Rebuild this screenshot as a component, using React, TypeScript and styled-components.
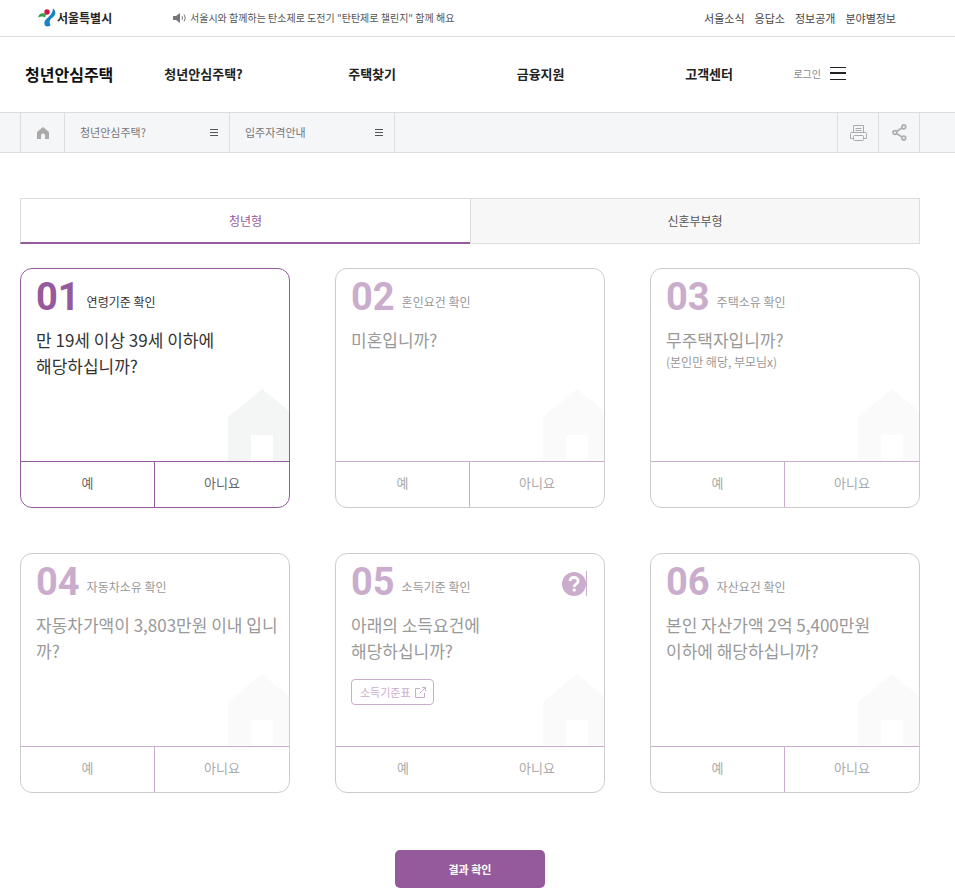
import React, { useState } from "react";
import styled, { createGlobalStyle, css } from "styled-components";

const PURPLE = "#955a9b";
const PURPLE_SOFT = "#caadcd";
const LINE = "#dddddd";

const GlobalStyle = createGlobalStyle`
  *, *::before, *::after { box-sizing: border-box; }
  body {
    margin: 0;
    background: #fff;
    color: #333;
    font-family: "Noto Sans CJK KR", "Noto Sans", sans-serif;
    font-size: 12px;
    line-height: 20px;
  }
  a { color: inherit; text-decoration: none; }
  h1, h2, p, ul, ol { margin: 0; padding: 0; font-weight: inherit; font-size: inherit; }
  ul, ol { list-style: none; }
  button { font: inherit; color: inherit; background: none; border: 0; padding: 0; margin: 0; cursor: pointer; }
  svg { display: block; flex: none; }
`;

const TopBar = styled.div`
  display: flex;
  align-items: center;
  height: 37px;
  padding: 0 59px 0 37px;
  border-bottom: 1px solid ${LINE};
`;

const CityLogo = styled.a`
  display: flex;
  align-items: center;
  gap: 1px;
  width: 136px;
  color: #2b2522;
  font-size: 12px;
  font-weight: 700;
`;

const Notice = styled.a`
  display: flex;
  align-items: center;
  gap: 3px;
  color: #555;
  font-size: 10px;
`;

const UtilityLinks = styled.ul`
  display: flex;
  gap: 10px;
  margin-left: auto;
  color: #444;
  font-size: 11px;
`;

const MainHeader = styled.header`
  display: flex;
  align-items: center;
  height: 75px;
  padding: 0 109px 2px 25px;
`;

const Brand = styled.h1`
  color: #111;
  font-size: 16px;
  font-weight: 700;
`;

const MainNav = styled.nav`
  flex: 1;
  padding-left: 6px;
`;

const MainNavList = styled.ul`
  display: grid;
  grid-template-columns: repeat(4, 1fr);
  text-align: center;
  color: #222;
  font-size: 13px;
  font-weight: 700;
`;

const Login = styled.a`
  color: #888;
  font-size: 10px;
`;

const MenuButton = styled.button`
  margin-left: 9px;
`;

const LocationBar = styled.nav`
  display: flex;
  height: 41px;
  padding: 0 35px 0 20px;
  border: solid ${LINE};
  border-width: 1px 0;
  background: #f5f6f8;
`;

const LocationHome = styled.a`
  display: flex;
  align-items: center;
  justify-content: center;
  width: 45px;
  border: solid ${LINE};
  border-width: 0 1px;
`;

const LocationMenu = styled.button`
  display: flex;
  align-items: center;
  justify-content: space-between;
  width: 165px;
  padding: 0 11px 1px 15px;
  border-right: 1px solid ${LINE};
  color: #777;
  font-size: 11px;
`;

const LocationTools = styled.div`
  display: flex;
  margin-left: auto;
  border-left: 1px solid ${LINE};
`;

const ToolButton = styled.button`
  display: flex;
  align-items: center;
  justify-content: center;
  width: 41px;
  border-right: 1px solid ${LINE};
`;

const Content = styled.main`
  padding: 45px 35px 7px 20px;
`;

const Tabs = styled.div`
  display: grid;
  grid-template-columns: 1fr 1fr;
`;

const Tab = styled.button<{ $active: boolean }>`
  height: 46px;
  border: 1px solid ${LINE};
  background: #f7f7f7;
  color: #555;
  font-size: 12px;
  &:first-child {
    border-right: 0;
  }
  ${(p) =>
    p.$active &&
    css`
      border-bottom: 2px solid ${PURPLE};
      background: #fff;
      color: ${PURPLE};
    `}
`;

const CardGrid = styled.ol`
  display: grid;
  grid-template-columns: repeat(3, 1fr);
  gap: 45px;
  margin-top: 24px;
`;

const Card = styled.li<{ $active: boolean }>`
  --accent: ${(p) => (p.$active ? PURPLE : PURPLE_SOFT)};
  display: flex;
  flex-direction: column;
  min-height: 240px;
  border: 1px solid ${(p) => (p.$active ? PURPLE : "#cccccc")};
  border-radius: 12px;
  overflow: hidden;
  color: ${(p) => (p.$active ? "#333" : "#999")};
`;

const CardBody = styled.div`
  position: relative;
  flex: 1;
  padding: 8px 10px 15px 15px;
`;

const CardTitle = styled.h2`
  display: flex;
  align-items: flex-start;
  gap: 7px;
  height: 50px;
  font-size: 12px;
  line-height: 50px;
`;

const StepNumber = styled.span`
  color: var(--accent);
  font-family: Roboto, sans-serif;
  font-size: 38px;
  font-weight: 700;
  line-height: 40px;
`;

const Question = styled.p`
  font-size: 17px;
  line-height: 26px;
  word-break: break-all;
`;

const QuestionNote = styled.p`
  font-size: 12px;
  line-height: 18px;
`;

const HouseShape = styled.svg`
  position: absolute;
  right: 0;
  bottom: 0;
`;

const HelpLink = styled.a`
  position: absolute;
  top: 17px;
  right: 17px;
  border-right: 1px solid var(--accent);
`;

const TableLink = styled.a`
  display: inline-flex;
  align-items: center;
  gap: 4px;
  height: 26px;
  margin-top: 15px;
  padding: 0 7px 0 8px;
  border: 1px solid var(--accent);
  border-radius: 4px;
  color: var(--accent);
  font-size: 11px;
`;

const Answers = styled.div<{ $divided: boolean }>`
  display: grid;
  grid-template-columns: 1fr 1fr;
  height: 46px;
  border-top: 1px solid var(--accent);
  button:first-child {
    border-right: ${(p) => (p.$divided ? "1px solid var(--accent)" : "0")};
  }
`;

const Answer = styled.button<{ $active: boolean }>`
  padding-bottom: 3px;
  color: ${(p) => (p.$active ? "#666" : "#aaa")};
  font-size: 13px;
`;

const Submit = styled.button`
  display: block;
  width: 150px;
  height: 38px;
  margin: 57px auto 0;
  border-radius: 5px;
  background: ${PURPLE};
  color: #fff;
  font-size: 11px;
  font-weight: 700;
`;

const CityMark = () => (
  <svg width="19" height="20" viewBox="0 0 19 20" aria-hidden="true">
    <path d="M1 9.500C2 5.500 5.500 4 9 6.500L8 9.500C6 8 3.500 8.500 1 9.500Z" fill="#2f9e49" />
    <circle cx="10" cy="4" r="2.700" fill="#d21243" />
    <path d="M16 .500C19.500 3 19 7.500 15.500 9.500C12.500 11.500 12 14 13.500 17.500C10 20 6.500 18 7.500 14C8.500 10 15.500 8 16 .500Z" fill="#1783c6" />
  </svg>
);

const SpeakerIcon = () => (
  <svg width="14" height="12" viewBox="0 0 14 12" fill="none" stroke="#777" aria-hidden="true">
    <path d="M0 4H3L7 1V11L3 8H0Z" fill="#777" stroke="none" />
    <path d="M9 4.200Q10 6 9 7.800M11 2.500Q13.600 6 11 9.500" />
  </svg>
);

const MenuIcon = () => (
  <svg width="16" height="13" viewBox="0 0 16 13" fill="#222" aria-hidden="true">
    <path d="M0 0H16V1H0ZM0 5H16V7H0ZM0 12H16V13H0Z" />
  </svg>
);

const HomeIcon = () => (
  <svg width="12" height="12" viewBox="0 0 12 12" aria-hidden="true">
    <path d="M6 0L12 5V12H8V8.500Q8 6.500 6 6.500T4 8.500V12H0V5Z" fill="#aaa" />
  </svg>
);

const ListIcon = () => (
  <svg width="8" height="7" viewBox="0 0 8 7" fill="#555" aria-hidden="true">
    <path d="M0 0H8V1H0ZM0 3H8V4H0ZM0 6H8V7H0Z" />
  </svg>
);

const PrintIcon = () => (
  <svg width="17" height="16" viewBox="0 0 17 16" fill="none" stroke="#aaa" aria-hidden="true">
    <path d="M3.500 7V.500H13.500V7M5.500 3.500H11.500M5.500 5.500H11.500M3.500 13.500H.500V8.500Q.500 7.500 1.500 7.500H15.500Q16.500 7.500 16.500 8.500V13.500H13.500" />
    <rect x="3.500" y="10.500" width="10" height="5" rx="1" />
  </svg>
);

const ShareIcon = () => (
  <svg width="15" height="17" viewBox="0 0 15 17" fill="none" stroke="#b0b0b0" strokeWidth="1.800" aria-hidden="true">
    <path d="M4.500 7.500L10 4M4.500 9.500L10 13" />
    <circle cx="2.900" cy="8.500" r="1.900" />
    <circle cx="11.800" cy="2.900" r="1.900" />
    <circle cx="11.800" cy="14.100" r="1.900" />
  </svg>
);

const HelpIcon = () => (
  <svg width="24" height="25" viewBox="0 0 24 25" fill="none" aria-hidden="true">
    <circle cx="12" cy="13" r="12" fill={PURPLE_SOFT} />
    <path d="M8 10.200C8.200 7.500 10 6.500 12 6.500C14.500 6.500 16.200 8 16.200 10C16.200 12.800 12.200 12.800 12.200 16" stroke="#fff" strokeWidth="2.800" />
    <circle cx="12.200" cy="19" r="1.700" fill="#fff" />
  </svg>
);

const OpenIcon = () => (
  <svg width="11" height="11" viewBox="0 0 11 11" fill="none" stroke={PURPLE_SOFT} aria-hidden="true">
    <path d="M5 1.500H.500V10.500H9.500V6M7 .500H10.500V4M10.500 .500L5 6" />
  </svg>
);

const House = ({ active }: { active: boolean }) => (
  <HouseShape width="61" height="72" viewBox="0 0 61 72" aria-hidden="true">
    <path d="M0 28L34 0L61 22V72H45V46H23V72H0Z" fill={active ? "#f4f6f6" : "#fafafa"} />
  </HouseShape>
);

interface Step {
  title: string;
  lines: string[];
  note?: string;
  help?: boolean;
  tableLabel?: string;
}

const steps: Step[] = [
  { title: "연령기준 확인", lines: ["만 19세 이상 39세 이하에", "해당하십니까?"] },
  { title: "혼인요건 확인", lines: ["미혼입니까?"] },
  { title: "주택소유 확인", lines: ["무주택자입니까?"], note: "(본인만 해당, 부모님x)" },
  { title: "자동차소유 확인", lines: ["자동차가액이 3,803만원 이내 입니까?"] },
  { title: "소득기준 확인", lines: ["아래의 소득요건에", "해당하십니까?"], help: true, tableLabel: "소득기준표" },
  { title: "자산요건 확인", lines: ["본인 자산가액 2억 5,400만원", "이하에 해당하십니까?"] },
];

const utilities = ["서울소식", "응답소", "정보공개", "분야별정보"];
const menus = ["청년안심주택?", "주택찾기", "금융지원", "고객센터"];
const tabs = ["청년형", "신혼부부형"];

export default function App() {
  const [tab, setTab] = useState(0);
  const [current, setCurrent] = useState(0);

  return (
    <>
      <GlobalStyle />
      <TopBar>
        <CityLogo href="#">
          <CityMark />
          서울특별시
        </CityLogo>
        <Notice href="#">
          <SpeakerIcon />
          서울시와 함께하는 탄소제로 도전기 "탄탄제로 챌린지" 함께 해요
        </Notice>
        <UtilityLinks>
          {utilities.map((label) => (
            <li key={label}>
              <a href="#">{label}</a>
            </li>
          ))}
        </UtilityLinks>
      </TopBar>
      <MainHeader>
        <Brand>
          <a href="#">청년안심주택</a>
        </Brand>
        <MainNav>
          <MainNavList>
            {menus.map((label) => (
              <li key={label}>
                <a href="#">{label}</a>
              </li>
            ))}
          </MainNavList>
        </MainNav>
        <Login href="#">로그인</Login>
        <MenuButton aria-label="전체메뉴">
          <MenuIcon />
        </MenuButton>
      </MainHeader>
      <LocationBar>
        <LocationHome href="#" aria-label="홈">
          <HomeIcon />
        </LocationHome>
        {["청년안심주택?", "입주자격안내"].map((label) => (
          <LocationMenu key={label}>
            {label}
            <ListIcon />
          </LocationMenu>
        ))}
        <LocationTools>
          <ToolButton aria-label="인쇄">
            <PrintIcon />
          </ToolButton>
          <ToolButton aria-label="공유">
            <ShareIcon />
          </ToolButton>
        </LocationTools>
      </LocationBar>
      <Content>
        <Tabs role="tablist">
          {tabs.map((label, i) => (
            <Tab key={label} role="tab" aria-selected={tab === i} $active={tab === i} onClick={() => setTab(i)}>
              {label}
            </Tab>
          ))}
        </Tabs>
        <CardGrid>
          {steps.map((step, i) => {
            const active = i === current;
            const advance = () => active && setCurrent(i + 1);
            return (
              <Card key={step.title} $active={active}>
                <CardBody>
                  <House active={active} />
                  <CardTitle>
                    <StepNumber>{`0${i + 1}`}</StepNumber>
                    {step.title}
                  </CardTitle>
                  {step.help && (
                    <HelpLink href="#" aria-label="도움말">
                      <HelpIcon />
                    </HelpLink>
                  )}
                  {step.lines.map((line) => (
                    <Question key={line}>{line}</Question>
                  ))}
                  {step.note && <QuestionNote>{step.note}</QuestionNote>}
                  {step.tableLabel && (
                    <TableLink href="#">
                      {step.tableLabel}
                      <OpenIcon />
                    </TableLink>
                  )}
                </CardBody>
                <Answers $divided={!step.tableLabel}>
                  <Answer $active={active} onClick={advance}>
                    예
                  </Answer>
                  <Answer $active={active} onClick={advance}>
                    아니요
                  </Answer>
                </Answers>
              </Card>
            );
          })}
        </CardGrid>
        <Submit>결과 확인</Submit>
      </Content>
    </>
  );
}
